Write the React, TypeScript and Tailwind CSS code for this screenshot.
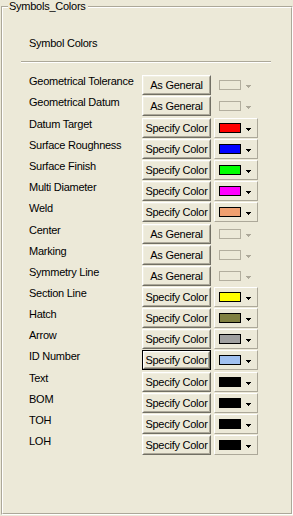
import React from "react";

type Row = {
  label: string;
  mode: "general" | "specify";
  color?: string;
  tall?: boolean;
  focused?: boolean;
};

const rows: Row[] = [
  { label: "Geometrical Tolerance", mode: "general" },
  { label: "Geometrical Datum", mode: "general", tall: true },
  { label: "Datum Target", mode: "specify", color: "#FF0000" },
  { label: "Surface Roughness", mode: "specify", color: "#0000FF" },
  { label: "Surface Finish", mode: "specify", color: "#00FF00" },
  { label: "Multi Diameter", mode: "specify", color: "#FF00FF" },
  { label: "Weld", mode: "specify", color: "#F0A070", tall: true },
  { label: "Center", mode: "general" },
  { label: "Marking", mode: "general" },
  { label: "Symmetry Line", mode: "general" },
  { label: "Section Line", mode: "specify", color: "#FFFF00" },
  { label: "Hatch", mode: "specify", color: "#808040" },
  { label: "Arrow", mode: "specify", color: "#A0A0A0" },
  { label: "ID Number", mode: "specify", color: "#A0C0F0", tall: true, focused: true },
  { label: "Text", mode: "specify", color: "#000000" },
  { label: "BOM", mode: "specify", color: "#000000" },
  { label: "TOH", mode: "specify", color: "#000000" },
  { label: "LOH", mode: "specify", color: "#000000" },
];

function Arrow({ disabled }: { disabled?: boolean }) {
  const fill = disabled ? "#ACA899" : "#000000";
  return (
    <svg width="5" height="3" viewBox="0 0 5 3" shapeRendering="crispEdges">
      <rect x="0" y="0" width="5" height="1" fill={fill} />
      <rect x="1" y="1" width="3" height="1" fill={fill} />
      <rect x="2" y="2" width="1" height="1" fill={fill} />
    </svg>
  );
}

function PushButton({ text, focused }: { text: string; focused?: boolean }) {
  return (
    <div
      className={
        focused
          ? "w-[69px] h-[20px] border border-black"
          : "w-[69px] h-[20px]"
      }
    >
      <div className="h-full border border-t-white border-l-white border-r-[#716F64] border-b-[#716F64]">
        <div className="h-full flex items-center justify-center border border-t-[#F1EFE2] border-l-[#F1EFE2] border-r-[#ACA899] border-b-[#ACA899] bg-[#ECE9D8] leading-[13px] whitespace-nowrap">
          {text}
        </div>
      </div>
    </div>
  );
}

function ColorPicker({ color }: { color?: string }) {
  if (!color) {
    return (
      <div className="ml-[3px] w-[44px] h-[20px] flex items-center">
        <div className="ml-[5px] w-[22px] h-[10px] border border-[#B2AE9E]" />
        <div className="ml-[5px] mt-[2px] flex">
          <Arrow disabled />
        </div>
      </div>
    );
  }
  return (
    <div className="ml-[3px] w-[44px] h-[20px] flex items-center border border-t-white border-l-white border-r-[#ACA899] border-b-[#ACA899]">
      <div
        className="ml-[4px] w-[22px] h-[10px] border border-black"
        style={{ background: color }}
      />
      <div className="ml-[5px] mt-[2px] flex">
        <Arrow />
      </div>
    </div>
  );
}

export default function App() {
  return (
    <div
      className="relative w-[293px] h-[516px] bg-[#ECE9D8] text-black text-[11px] tracking-[-0.25px] leading-[13px]"
      style={{ fontFamily: '"Liberation Sans", Arial, sans-serif' }}
    >
      <div className="pt-[6px] pl-[1px]">
        {/* etched group box */}
        <div className="w-[292px] h-[509px] border border-t-[#ACA899] border-l-[#ACA899] border-r-white border-b-white">
          <div className="h-full border border-t-white border-l-white border-r-[#ACA899] border-b-[#ACA899]">
            <div className="pl-[26px] pt-[29px]">Symbol Colors</div>
            <div className="ml-[18px] mt-[11px] w-[250px] border-t border-t-[#ACA899] border-b border-b-white" />
            <div className="mt-[12px]">
              {rows.map((r) => (
                <div
                  key={r.label}
                  className={r.tall ? "flex h-[22px]" : "flex h-[21px]"}
                >
                  <div className="w-[139px] pl-[26px] whitespace-nowrap">{r.label}</div>
                  <PushButton
                    text={r.mode === "general" ? "As General" : "Specify Color"}
                    focused={r.focused}
                  />
                  <ColorPicker color={r.mode === "specify" ? r.color : undefined} />
                </div>
              ))}
            </div>
          </div>
        </div>
      </div>
      {/* group box caption over the frame */}
      <div className="absolute left-[8px] top-0 pl-[1px] pr-[2px] bg-[#ECE9D8]">
        Symbols_Colors
      </div>
    </div>
  );
}
